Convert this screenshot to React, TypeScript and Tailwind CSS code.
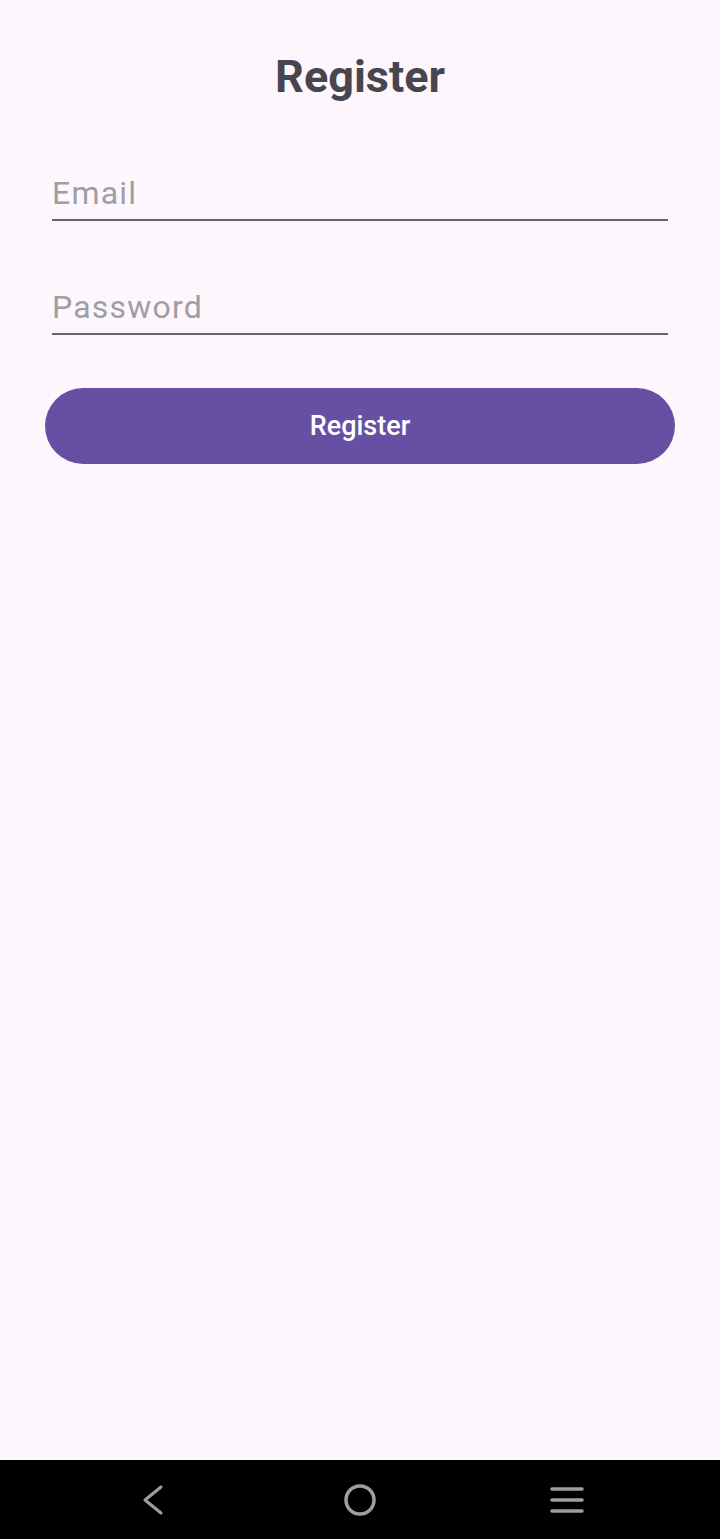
import React from 'react';

const NavBar: React.FC = () => (
  <div className="h-[79px] bg-black flex items-center justify-between px-[136px] shrink-0">
    <svg width="34" height="34" viewBox="0 0 34 34" fill="none">
      <path d="M25 4 L9 17 L25 30" stroke="#9e9e9e" strokeWidth="3" strokeLinecap="round" strokeLinejoin="round" />
    </svg>
    <svg width="34" height="34" viewBox="0 0 34 34" fill="none">
      <circle cx="17" cy="17" r="14" stroke="#9e9e9e" strokeWidth="3.5" />
    </svg>
    <svg width="34" height="34" viewBox="0 0 34 34" fill="none">
      <path d="M2 6 H32 M2 17 H32 M2 28 H32" stroke="#9e9e9e" strokeWidth="3.5" strokeLinecap="round" />
    </svg>
  </div>
);

const Field: React.FC<{ placeholder: string; type?: string }> = ({ placeholder, type = 'text' }) => (
  <div className="border-b-2 border-[#67636b] pb-[6px]">
    <input
      type={type}
      placeholder={placeholder}
      className="w-full bg-transparent outline-none text-[32px] leading-[40px] tracking-[1.2px] text-[#1d1b20] placeholder:text-[#a09da4]"
    />
  </div>
);

const App: React.FC = () => {
  return (
    <div className="min-h-screen h-[1539px] flex flex-col bg-[#fdf7fd]" style={{ fontFamily: 'Roboto, "Noto Sans", sans-serif' }}>
      <div className="flex-1 flex flex-col">
        <h1 className="pt-[51px] text-center text-[45px] leading-[52px] font-bold text-[#49454f]">Register</h1>
        <div className="mx-[52px] mt-[70px] flex flex-col gap-[66px]">
          <Field placeholder="Email" />
          <Field placeholder="Password" type="password" />
        </div>
        <div className="px-[45px] mt-[53px]">
          <button className="w-full h-[76px] rounded-full bg-[#6750a4] text-white text-[27px] font-medium">
            Register
          </button>
        </div>
      </div>
      <NavBar />
    </div>
  );
};

export default App;
